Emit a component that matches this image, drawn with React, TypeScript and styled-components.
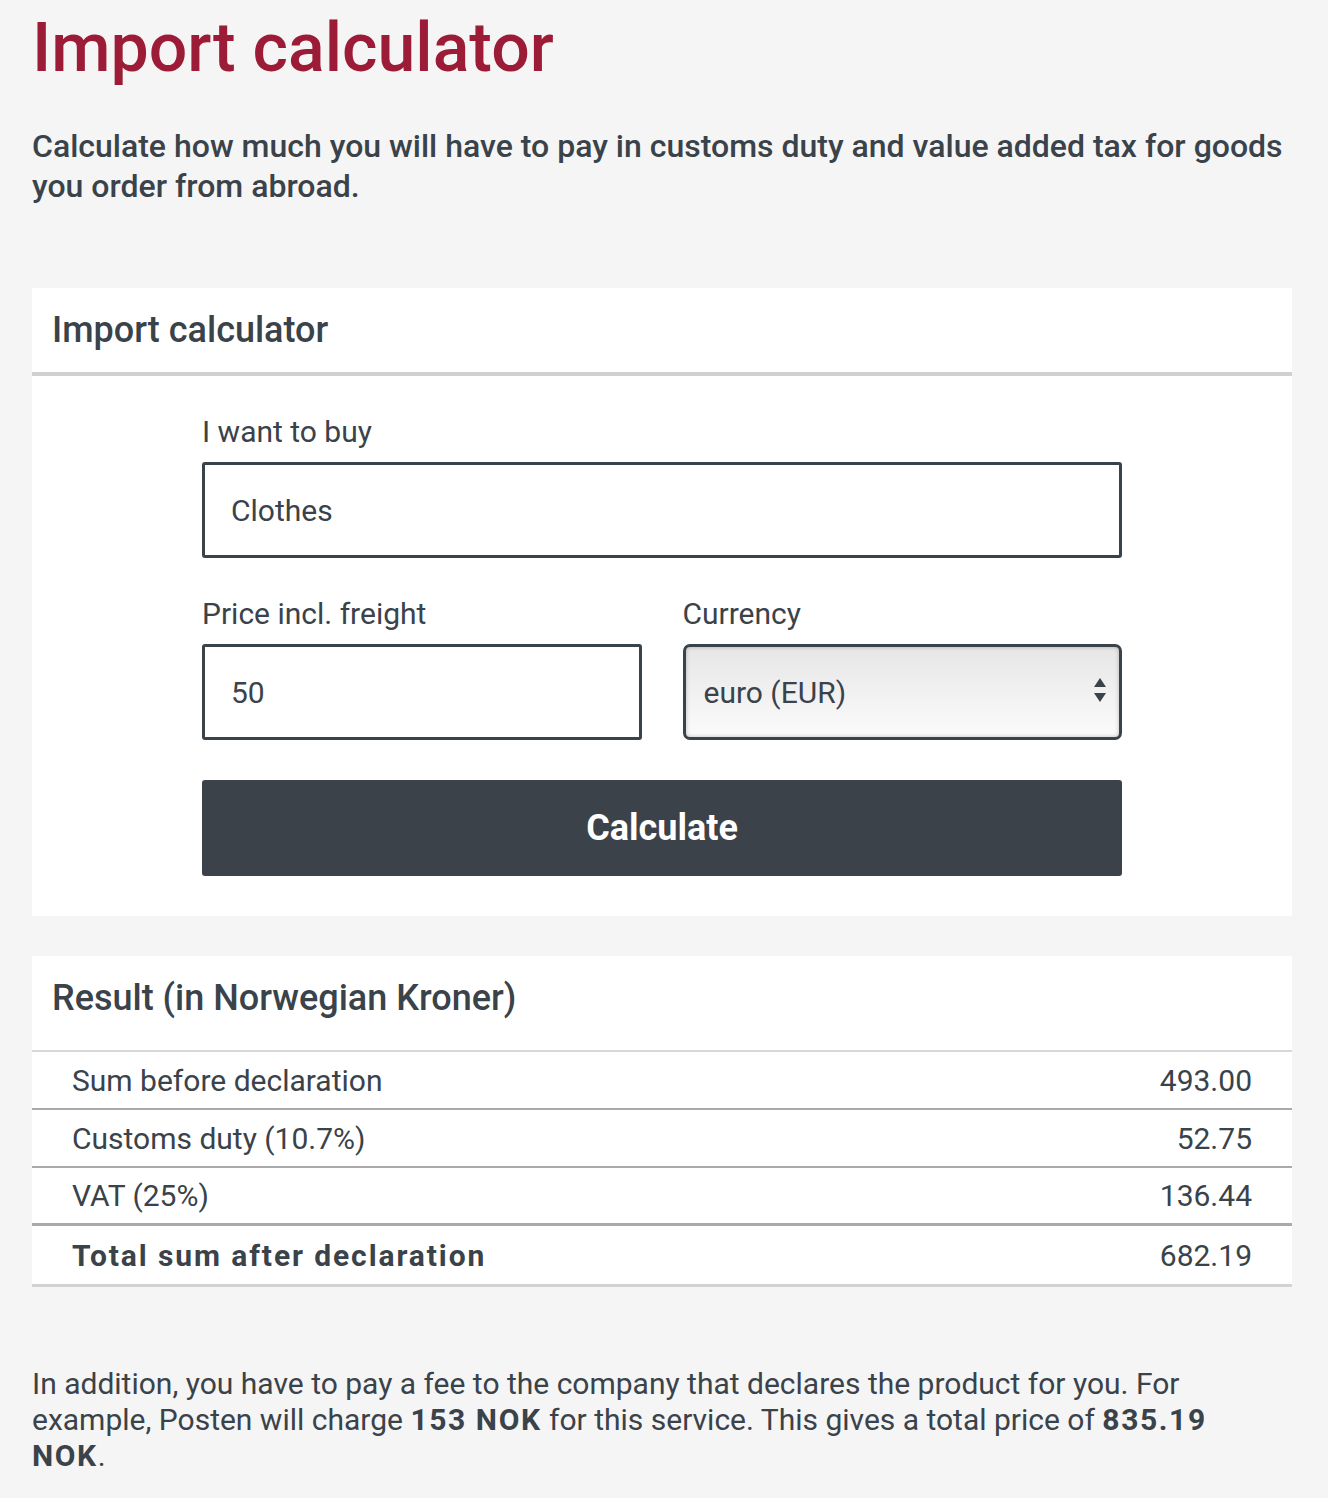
import styled, { createGlobalStyle } from "styled-components";

const GlobalStyle = createGlobalStyle`
  html, body {
    margin: 0;
    padding: 0;
    background: #f5f5f5;
  }
  body {
    font-family: Roboto, "Liberation Sans", Arial, sans-serif;
    color: #3a424a;
  }
  * { box-sizing: border-box; }
`;

const Page = styled.div`
  width: 1328px;
  padding: 0 36px 24px 32px;
`;

const Title = styled.h1`
  margin: 0;
  padding-top: 8px;
  font-size: 68px;
  font-weight: 500;
  line-height: 80px;
  color: #9c1c37;
`;

const Intro = styled.p`
  margin: 38px 0 0 0;
  font-size: 32px;
  font-weight: 500;
  line-height: 40px;
  color: #3a424a;
`;

const Card = styled.section<{ $top: number }>`
  background: #ffffff;
  margin-top: ${({ $top }) => $top}px;
`;

const CardHeader = styled.h2<{ $height: number; $light?: boolean }>`
  margin: 0;
  height: ${({ $height }) => $height}px;
  display: flex;
  align-items: center;
  padding: 0 20px ${({ $light }) => ($light ? 10 : 0)}px 20px;
  font-size: 36px;
  font-weight: 500;
  color: #3a424a;
  border-bottom: ${({ $light }) => ($light ? "2px solid #d8d8d8" : "4px solid #d0d0d0")};
`;

const Form = styled.form`
  width: 920px;
  margin: 0 auto;
  padding: 40px 0 40px 0;
  display: flex;
  flex-direction: column;
`;

const FieldRow = styled.div`
  display: grid;
  grid-template-columns: 1fr 1fr;
  gap: 41px;
  margin-top: 40px;
`;

const Field = styled.label`
  display: flex;
  flex-direction: column;
`;

const Label = styled.span`
  font-size: 30px;
  line-height: 32px;
  margin-bottom: 14px;
  color: #3a424a;
`;

const TextInput = styled.input`
  height: 96px;
  width: 100%;
  border: 3px solid #3a424a;
  border-radius: 3px;
  padding: 0 26px;
  font-family: inherit;
  font-size: 30px;
  color: #3a424a;
  background: #ffffff;
  outline: none;
`;

const SelectWrap = styled.div`
  position: relative;
`;

const Select = styled.select`
  appearance: none;
  -webkit-appearance: none;
  height: 96px;
  width: 100%;
  border: 3px solid #3a424a;
  border-radius: 7px;
  padding: 0 18px;
  font-family: inherit;
  font-size: 30px;
  color: #3a424a;
  background: linear-gradient(#e6e6e6, #fbfbfb);
  box-shadow: inset 0 0 4px rgba(0, 0, 0, 0.25);
  outline: none;
`;

const SelectArrows = styled.svg`
  position: absolute;
  right: 15px;
  top: 32px;
  width: 14px;
  height: 28px;
  pointer-events: none;
`;

const Button = styled.button`
  margin-top: 40px;
  height: 96px;
  width: 100%;
  border: none;
  border-radius: 3px;
  background: #3b424a;
  color: #ffffff;
  font-family: inherit;
  font-size: 36px;
  font-weight: 700;
  cursor: pointer;
`;

const ResultTable = styled.div`
  display: flex;
  flex-direction: column;
`;

const ResultRow = styled.div<{ $total?: boolean }>`
  display: flex;
  justify-content: space-between;
  align-items: center;
  height: ${({ $total }) => ($total ? 61 : 58)}px;
  padding: 0 40px;
  font-size: 30px;
  color: #3a424a;
  border-bottom: ${({ $total }) => ($total ? "3px solid #d2d2d2" : "2px solid #a9a9a9")};
  &:nth-child(3) {
    border-bottom: 3px solid #a9a9a9;
  }
`;

const RowLabel = styled.span<{ $bold?: boolean }>`
  font-weight: ${({ $bold }) => ($bold ? 700 : 400)};
  letter-spacing: ${({ $bold }) => ($bold ? "1.9px" : "0")};
`;

const Note = styled.p`
  margin: 79px 0 0 0;
  max-width: 1230px;
  font-size: 30px;
  line-height: 36px;
  color: #3a424a;
  strong {
    font-weight: 700;
    letter-spacing: 1.6px;
  }
`;

const rows = [
  { label: "Sum before declaration", value: "493.00" },
  { label: "Customs duty (10.7%)", value: "52.75" },
  { label: "VAT (25%)", value: "136.44" },
];

export default function App() {
  return (
    <>
      <GlobalStyle />
      <Page>
        <Title>Import calculator</Title>
        <Intro>
          Calculate how much you will have to pay in customs duty and value added tax for goods you
          order from abroad.
        </Intro>

        <Card $top={82}>
          <CardHeader $height={88}>Import calculator</CardHeader>
          <Form onSubmit={(e) => e.preventDefault()}>
            <Field>
              <Label>I want to buy</Label>
              <TextInput defaultValue="Clothes" />
            </Field>
            <FieldRow>
              <Field>
                <Label>Price incl. freight</Label>
                <TextInput defaultValue="50" />
              </Field>
              <Field>
                <Label>Currency</Label>
                <SelectWrap>
                  <Select defaultValue="EUR">
                    <option value="EUR">euro (EUR)</option>
                    <option value="USD">US dollar (USD)</option>
                    <option value="GBP">British pound (GBP)</option>
                  </Select>
                  <SelectArrows viewBox="0 0 14 28">
                    <path d="M7 2 L13 11 H1 Z" fill="#3a424a" />
                    <path d="M7 26 L13 17 H1 Z" fill="#3a424a" />
                  </SelectArrows>
                </SelectWrap>
              </Field>
            </FieldRow>
            <Button type="submit">Calculate</Button>
          </Form>
        </Card>

        <Card $top={40}>
          <CardHeader $height={96} $light>
            Result (in Norwegian Kroner)
          </CardHeader>
          <ResultTable>
            {rows.map((r) => (
              <ResultRow key={r.label}>
                <RowLabel>{r.label}</RowLabel>
                <span>{r.value}</span>
              </ResultRow>
            ))}
            <ResultRow $total>
              <RowLabel $bold>Total sum after declaration</RowLabel>
              <span>682.19</span>
            </ResultRow>
          </ResultTable>
        </Card>

        <Note>
          In addition, you have to pay a fee to the company that declares the product for you. For
          example, Posten will charge <strong>153 NOK</strong> for this service. This gives a total
          price of <strong>835.19 NOK</strong>.
        </Note>
      </Page>
    </>
  );
}
